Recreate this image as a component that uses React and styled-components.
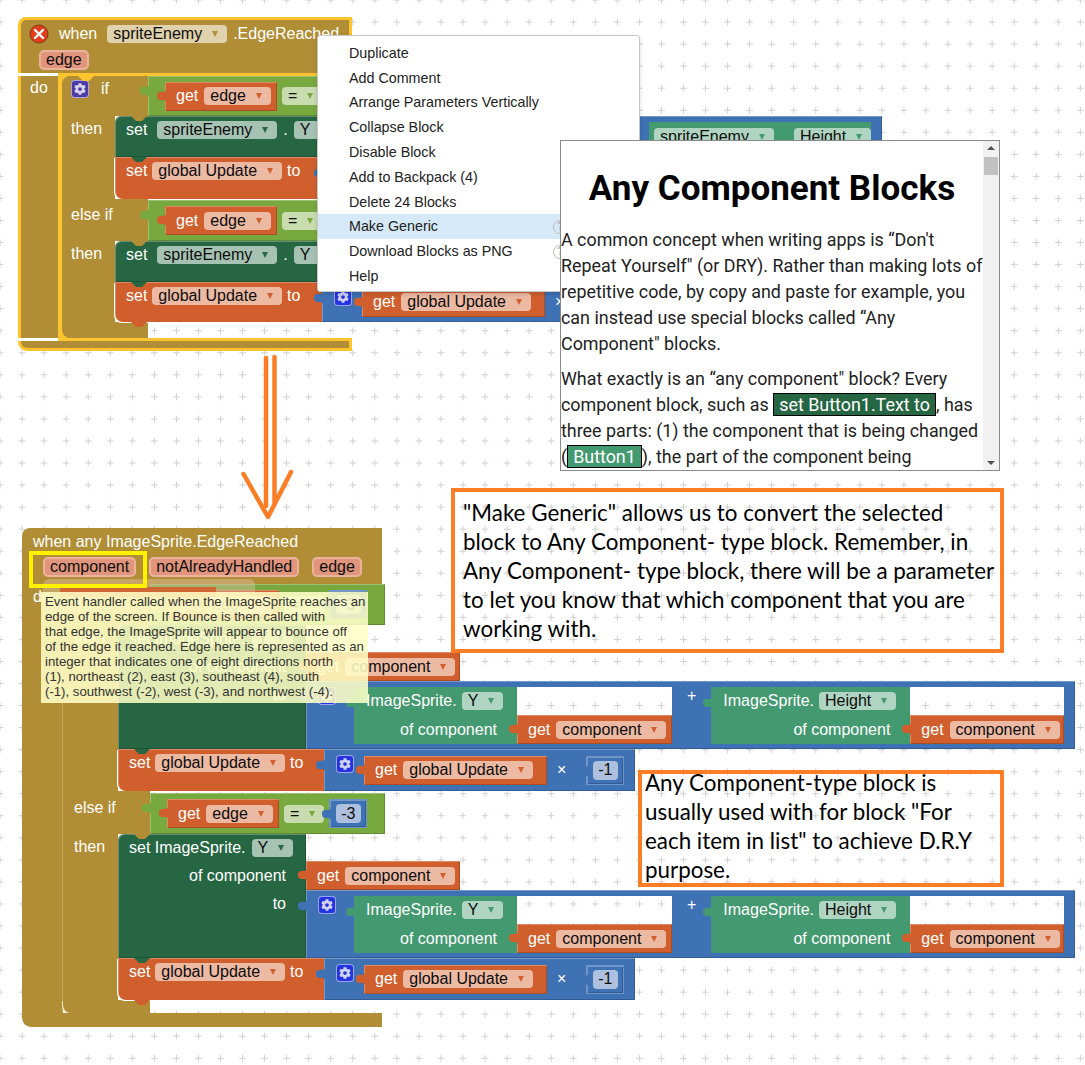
import styled, { createGlobalStyle, css } from "styled-components";
import { FaCog } from "react-icons/fa";

const BROWN = "#b18e35";
const YELLOW = "#fdc42f";
const GREEN = "#77a93f";
const DARK = "#266643";
const ORANGE = "#d05f2d";
const BLUE = "#3f71b5";
const TEAL = "#439970";
const NOTE = "#fb7d25";

const GlobalStyle = createGlobalStyle`
  html, body { margin: 0; padding: 0; background: #fff; }
  body { font-family: "Liberation Sans", Arial, sans-serif; }
`;

// blockly workspace dots, fixed so holes in blocks line up with the canvas
const dots = css`
  background-color: #fff;
  background-image:
    radial-gradient(0.8px 3px at 50% 50%, #cfcfcf 99%, transparent),
    radial-gradient(3px 0.8px at 50% 50%, #cfcfcf 99%, transparent);
  background-size: 22.05px 22.05px;
  background-position: -11px -11px;
  background-attachment: fixed;
`;

const bevel = css`
  box-shadow: inset 1px 1px 0 rgba(255, 255, 255, 0.28), inset -1px -1px 0 rgba(0, 0, 0, 0.18);
`;

const Canvas = styled.div`
  ${dots}
  position: relative;
  width: 1085px;
  height: 1065px;
  overflow: hidden;
  font-size: 16px;
  line-height: 18px;
`;

const EventBlock = styled.div`
  position: absolute;
  left: ${(p) => p.$left}px;
  top: ${(p) => p.$top}px;
  width: ${(p) => p.$w}px;
  display: flex;
  flex-direction: column;
`;

const Head = styled.div`
  box-sizing: border-box;
  height: ${(p) => p.$h}px;
  background: ${BROWN};
  border-radius: 8px 0 0 0;
  display: flex;
  flex-direction: column;
  ${(p) =>
    p.$selected &&
    css`
      border: 3px solid ${YELLOW};
      border-bottom: 0;
    `}
`;

const HeadRow = styled.div`
  display: flex;
  align-items: center;
  flex-shrink: 0;
  gap: ${(p) => p.$gap}px;
  height: ${(p) => p.$h}px;
  padding-left: ${(p) => p.$pad}px;
`;

const Edge = styled.div`
  height: 3px;
  flex-shrink: 0;
  margin-left: 40px;
  background: ${YELLOW};
`;

const Label = styled.span`
  color: #fff;
  white-space: nowrap;
`;

const HeadSuffix = styled(Label)`
  margin-left: -4px;
`;

const SetWord = styled(Label)`
  margin-right: 4px;
`;

const Body = styled.div`
  display: flex;
  align-items: stretch;
`;

const OuterSpine = styled.div`
  box-sizing: border-box;
  flex-shrink: 0;
  width: ${(p) => p.$w}px;
  background: ${BROWN};
  padding: ${(p) => (p.$selected ? "3px 0 0 9px" : "4px 0 0 11px")};
  border-right: 1px solid #c5a655;
  ${(p) =>
    p.$selected &&
    css`
      border-left: 3px solid ${YELLOW};
      border-right: 4px solid ${YELLOW};
    `}
`;

const IfStack = styled.div`
  display: flex;
  flex-direction: column;
`;

const CondRow = styled.div`
  display: flex;
  flex-shrink: 0;
  align-self: flex-start;
  height: ${(p) => p.$h}px;
  background: ${(p) => p.$corner || "transparent"};
`;

const CondSpine = styled.div`
  position: relative;
  box-sizing: border-box;
  flex-shrink: 0;
  width: ${(p) => p.$w}px;
  background: ${BROWN};
  display: flex;
  align-items: flex-start;
  gap: 12px;
  padding: ${(p) => p.$top}px 0 0 ${(p) => p.$pad}px;
  border-radius: ${(p) => (p.$round ? "8px 0 0 0" : "0")};
`;

const CondBlock = styled.div`
  ${bevel}
  position: relative;
  flex-shrink: 0;
  box-sizing: border-box;
  margin-top: ${(p) => p.$gap || 0}px;
  width: ${(p) => p.$w}px;
  background: ${GREEN};
  display: flex;
  align-items: center;
  gap: 5px;
  padding-left: 17px;
`;

const ThenRow = styled.div`
  display: flex;
  flex-shrink: 0;
`;

const ThenSpine = styled.div`
  box-sizing: border-box;
  flex-shrink: 0;
  width: ${(p) => p.$w}px;
  background: ${BROWN};
  padding: ${(p) => p.$top}px 0 0 ${(p) => p.$pad}px;
`;

const Stack = styled.div`
  display: flex;
  flex-direction: column;
`;

const StackLine = styled.div`
  display: flex;
  flex-shrink: 0;
`;

const Statement = styled.div`
  ${bevel}
  position: relative;
  box-sizing: border-box;
  flex-shrink: 0;
  width: ${(p) => p.$w}px;
  height: ${(p) => p.$h}px;
  background: ${(p) => p.$bg};
  border-radius: ${(p) => (p.$first ? "6px" : "0")} 0 0 ${(p) => (p.$last ? "8px" : "0")};
  display: flex;
  align-items: ${(p) => (p.$tall ? "stretch" : "flex-start")};
  flex-direction: ${(p) => (p.$tall ? "column" : "row")};
  padding: 5px 0 0 11px;
  gap: 6px;
  ${(p) =>
    p.$last &&
    css`
      box-shadow: inset 1px 1px 0 rgba(255, 255, 255, 0.28), -1px 1px 0 #fff;
    `}
`;

const StatementLine = styled.div`
  display: flex;
  align-items: center;
  gap: 6px;
  height: ${(p) => p.$h}px;
  justify-content: ${(p) => (p.$end ? "flex-end" : "flex-start")};
  padding-right: ${(p) => (p.$end ? 20 : 0)}px;
`;

const DarkLine = styled.div`
  display: flex;
  align-items: center;
  gap: 5px;
  height: 18px;
`;

const NotchShape = styled.svg`
  position: absolute;
  left: 16px;
  ${(p) => (p.$hang ? "bottom: -5px;" : "top: 0;")}
  width: 16px;
  height: 5px;
`;

const Notch = ({ color, hang }) => (
  <NotchShape $hang={hang} viewBox="0 0 16 5">
    <path d="M0 0 H16 L11 5 H5 Z" fill={color} />
  </NotchShape>
);

const TabShape = styled.svg`
  position: absolute;
  left: -9px;
  top: ${(p) => p.$top}px;
  width: 10px;
  height: 16px;
`;

const Tab = ({ color, top = 7 }) => (
  <TabShape $top={top} viewBox="0 0 10 16">
    <path d="M10 0 V2 C9 6 1 1 1 8 C1 15 9 10 10 14 V16 Z" fill={color} />
  </TabShape>
);

const Chip = styled.span`
  display: inline-flex;
  flex-shrink: 0;
  align-items: center;
  height: 18px;
  padding: 0 9px 0 6px;
  gap: 10px;
  border-radius: 4px;
  background: ${(p) => p.$bg};
  color: #0d0d0d;
  white-space: nowrap;
  &::after {
    content: "";
    border-left: 3.5px solid transparent;
    border-right: 3.5px solid transparent;
    border-top: 6px solid ${(p) => p.$caret};
  }
`;

const ParamChip = styled.span`
  box-sizing: border-box;
  display: inline-flex;
  flex-shrink: 0;
  align-items: center;
  height: 20px;
  padding: 0 5px;
  border-radius: 5px;
  background: #e0957c;
  border: 2px solid #ebb39d;
  color: #0d0d0d;
  white-space: nowrap;
`;

const Mutator = styled.span`
  flex-shrink: 0;
  box-sizing: border-box;
  align-self: flex-start;
  margin-top: ${(p) => p.$top || 0}px;
  width: 18px;
  height: 18px;
  display: flex;
  align-items: center;
  justify-content: center;
  border-radius: 4px;
  background: ${(p) => p.$bg};
  border: 1px solid rgba(255, 255, 255, 0.55);
  color: rgba(255, 255, 255, 0.78);
  font-size: 12px;
`;

const GetBlock = styled.div`
  ${bevel}
  position: relative;
  box-sizing: border-box;
  flex-shrink: 0;
  width: ${(p) => p.$w}px;
  height: 29px;
  background: ${ORANGE};
  display: flex;
  align-items: center;
  gap: 6px;
  padding-left: 11px;
`;

const NumBlock = styled.div`
  ${bevel}
  position: relative;
  box-sizing: border-box;
  flex-shrink: 0;
  width: 38px;
  height: 29px;
  background: ${BLUE};
  display: flex;
  align-items: center;
  justify-content: center;
  border: 1px solid #6d93c9;
`;

const NumChip = styled.span`
  width: 25px;
  height: 19px;
  border-radius: 4px;
  background: #adc0de;
  color: #0d0d0d;
  display: flex;
  align-items: center;
  justify-content: center;
`;

const BlueBlock = styled.div`
  ${bevel}
  position: relative;
  box-sizing: border-box;
  flex-shrink: 0;
  width: ${(p) => p.$w}px;
  height: ${(p) => p.$h}px;
  background: ${BLUE};
  display: flex;
  align-items: ${(p) => p.$align || "center"};
  justify-content: ${(p) => p.$justify || "flex-start"};
  padding: ${(p) => p.$pad || "0 0 0 12px"};
`;

const ValueCol = styled.div`
  display: flex;
  flex-direction: column;
  margin-top: 27px;
`;

const Getter = styled.div`
  position: relative;
  flex-shrink: 0;
  width: ${(p) => p.$w}px;
  display: flex;
  flex-direction: column;
`;

const GetterRow = styled.div`
  display: flex;
  height: ${(p) => p.$h}px;
`;

const TealPart = styled.div`
  box-sizing: border-box;
  flex-shrink: 0;
  width: ${(p) => p.$w}px;
  background: ${TEAL};
  display: flex;
  align-items: center;
  justify-content: ${(p) => (p.$end ? "flex-end" : "flex-start")};
  gap: 5px;
  padding: ${(p) => p.$pad};
`;

const Hole = styled.div`
  ${dots}
  flex: 1;
`;

const Foot = styled.div`
  box-sizing: border-box;
  flex-shrink: 0;
  height: ${(p) => p.$h}px;
  background: ${BROWN};
  border-radius: 0 0 0 9px;
  ${(p) =>
    p.$selected &&
    css`
      border: 3px solid ${YELLOW};
      border-top: 0;
    `}
`;

const InnerFoot = styled.div`
  flex-shrink: 0;
  height: ${(p) => p.$h}px;
  width: ${(p) => p.$w}px;
  background: ${BROWN};
  border-radius: 0 0 0 8px;
  box-shadow: ${(p) => (p.$selected ? `-4px 3px 0 ${YELLOW}` : "-1px 1px 0 #efe6cc")};
`;

const RowGap = styled.div`
  flex-shrink: 0;
  width: ${(p) => p.$w}px;
`;

const CloseIcon = styled.svg`
  flex-shrink: 0;
  width: 20px;
  height: 20px;
`;

const GhostChip = styled.div`
  position: absolute;
  left: 43px;
  top: 579px;
  width: 212px;
  height: 34px;
  border-radius: 6px;
  background: rgba(225, 190, 160, 0.45);
`;

const GhostBar = styled.div`
  position: absolute;
  left: 60px;
  top: 587px;
  width: 156px;
  height: 10px;
  background: rgba(208, 95, 45, 0.9);
`;

const Highlight = styled.div`
  box-sizing: border-box;
  position: absolute;
  left: 29px;
  top: 551px;
  width: 118px;
  height: 37px;
  border: 4px solid #fff200;
`;

const Tooltip = styled.div`
  box-sizing: border-box;
  position: absolute;
  left: 41px;
  top: 592px;
  width: 327px;
  height: 111px;
  padding: 2px 0 0 4px;
  background: rgba(255, 255, 199, 0.87);
  color: #333;
  font-size: 13.2px;
  line-height: 15px;
  white-space: nowrap;
`;

const Menu = styled.div`
  box-sizing: border-box;
  position: absolute;
  left: 317px;
  top: 35px;
  width: 323px;
  height: 257px;
  padding-top: 4.5px;
  background: #fff;
  border: 1px solid #c8c8c8;
  border-radius: 3px;
  box-shadow: 0 2px 4px rgba(0, 0, 0, 0.15);
  display: flex;
  flex-direction: column;
`;

const MenuItem = styled.div`
  position: relative;
  flex-shrink: 0;
  height: 24.8px;
  display: flex;
  align-items: center;
  padding-left: 31px;
  font-size: 14.3px;
  color: #222;
  background: ${(p) => (p.$active ? "#d6e9f8" : "transparent")};
`;

const HelpDot = styled.span`
  position: absolute;
  left: 235px;
  top: 6px;
  width: 12px;
  height: 12px;
  border-radius: 50%;
  border: 1px solid #bbb;
  color: #999;
  font-size: 10px;
  line-height: 12px;
  text-align: center;
`;

const HelpPanel = styled.div`
  box-sizing: border-box;
  position: absolute;
  left: 560px;
  top: 140px;
  width: 440px;
  height: 331px;
  background: #fff;
  border: 1px solid #8a8a8a;
  display: flex;
  font-family: Roboto, "Liberation Sans", sans-serif;
  color: #222;
`;

const HelpBody = styled.div`
  flex: 1;
  min-width: 0;
  overflow: hidden;
  font-size: 17.9px;
  line-height: 26px;
`;

const HelpTitle = styled.h1`
  margin: 27px 0 17px;
  text-align: center;
  font-size: 35px;
  line-height: 42px;
  font-weight: 700;
  color: #000;
`;

const HelpText = styled.p`
  margin: 0 0 9px;
  white-space: nowrap;
`;

const CodeTag = styled.span`
  padding: 0 5px;
  background: ${(p) => p.$bg};
  border: 1px solid #000;
  color: #fff;
`;

const Scrollbar = styled.div`
  position: relative;
  flex-shrink: 0;
  width: 16px;
  background: #f1f1f1;
`;

const ScrollThumb = styled.div`
  position: absolute;
  left: 1px;
  top: 16px;
  width: 14px;
  height: 18px;
  background: #c1c1c1;
`;

const ScrollArrow = styled.div`
  position: absolute;
  left: 4px;
  ${(p) => (p.$down ? "bottom: 5px;" : "top: 5px;")}
  border-left: 4px solid transparent;
  border-right: 4px solid transparent;
  ${(p) => (p.$down ? "border-top" : "border-bottom")}: 4px solid #505050;
`;

const NoteBox = styled.div`
  box-sizing: border-box;
  position: absolute;
  left: ${(p) => p.$left}px;
  top: ${(p) => p.$top}px;
  width: ${(p) => p.$w}px;
  height: ${(p) => p.$h}px;
  padding-left: ${(p) => p.$pad}px;
  border: 4.5px solid ${NOTE};
  font-family: Lato, "Liberation Sans", sans-serif;
  font-size: 22.4px;
  line-height: 29px;
  color: #000;
  white-space: nowrap;
`;

const NoteText = styled.div`
  margin-top: ${(p) => p.$top}px;
`;

const ArrowDrawing = styled.svg`
  position: absolute;
  left: 235px;
  top: 350px;
  width: 65px;
  height: 175px;
`;

const EdgeChip = () => <Chip $bg="#ecb9a3" $caret={ORANGE}>edge</Chip>;

const GetEdge = () => (
  <GetBlock $w={112}>
    <Tab color={ORANGE} top={6} />
    <Label>get</Label>
    <EdgeChip />
  </GetBlock>
);

const GetGlobal = ({ w = 180 }) => (
  <GetBlock $w={w}>
    <Tab color={ORANGE} top={6} />
    <Label>get</Label>
    <Chip $bg="#ecb9a3" $caret={ORANGE}>global Update</Chip>
  </GetBlock>
);

const GetComponent = ({ w }) => (
  <GetBlock $w={w}>
    <Tab color={ORANGE} top={6} />
    <Label>get</Label>
    <Chip $bg="#ecb9a3" $caret={ORANGE}>component</Chip>
  </GetBlock>
);

const Condition = ({ w, value, gap }) => (
  <CondBlock $w={w} $gap={gap}>
    <Tab color={GREEN} top={7} />
    <GetEdge />
    <Chip $bg="#c8dcb0" $caret={GREEN}>=</Chip>
    {value && (
      <NumBlock>
        <Tab color={BLUE} top={6} />
        <NumChip>{value}</NumChip>
      </NumBlock>
    )}
  </CondBlock>
);

const SetGlobal = ({ w, h, last, gear, valueW }) => (
  <StackLine>
    <Statement $w={w} $h={h} $bg={ORANGE} $last={last}>
      <Notch color={DARK} />
      {last && <Notch color={ORANGE} hang />}
      <DarkLine>
        <Label>set</Label>
        <Chip $bg="#ecb9a3" $caret={ORANGE}>global Update</Chip>
        <Label>to</Label>
      </DarkLine>
    </Statement>
    <BlueBlock $w={valueW} $h={h}>
      <Tab color={BLUE} top={8} />
      <Mutator $bg={gear} $top={6}><FaCog /></Mutator>
      <RowGap $w={10} />
      <GetGlobal w={183} />
      <RowGap $w={10} />
      <Label>×</Label>
      <RowGap $w={20} />
      <NumBlock>
        <Tab color={BLUE} top={6} />
        <NumChip>-1</NumChip>
      </NumBlock>
    </BlueBlock>
  </StackLine>
);

const SetSprite = ({ h }) => (
  <StackLine>
    <Statement $w={210} $h={h} $bg={DARK} $first>
      <Notch color={BROWN} />
      <SetWord>set</SetWord>
      <Chip $bg="#a6c2b3" $caret={DARK}>spriteEnemy</Chip>
      <Label>.</Label>
      <Chip $bg="#a6c2b3" $caret={DARK}>Y</Chip>
    </Statement>
    <BlueBlock $w={557} $h={h} $justify="flex-end" $align="flex-start" $pad="6px 11px 0 0">
      <TealPart $w={222} $pad="6px 0 12px 5px">
        <Chip $bg="#b0d4c2" $caret={TEAL}>spriteEnemy</Chip>
        <RowGap $w={10} />
        <Chip $bg="#b0d4c2" $caret={TEAL}>Height</Chip>
      </TealPart>
    </BlueBlock>
  </StackLine>
);

const SpriteGetter = ({ w, tealW, prop, getW }) => (
  <Getter $w={w}>
    <Tab color={TEAL} top={8} />
    <GetterRow $h={28}>
      <TealPart $w={tealW} $pad="0 0 0 12px">
        <Label>ImageSprite.</Label>
        <Chip $bg="#b0d4c2" $caret={TEAL}>{prop}</Chip>
      </TealPart>
      <Hole />
    </GetterRow>
    <GetterRow $h={29}>
      <TealPart $w={tealW} $end $pad="0 20px 0 0">
        <Label>of component</Label>
      </TealPart>
      <GetComponent w={getW} />
    </GetterRow>
  </Getter>
);

const SetAnySprite = () => (
  <StackLine>
    <Statement $w={188} $h={124} $bg={DARK} $first $tall>
      <Notch color={BROWN} />
      <StatementLine $h={18}>
        <Label>set ImageSprite.</Label>
        <Chip $bg="#a6c2b3" $caret={DARK}>Y</Chip>
      </StatementLine>
      <StatementLine $h={26} $end>
        <Label>of component</Label>
      </StatementLine>
      <StatementLine $h={18} $end>
        <Label>to</Label>
      </StatementLine>
    </Statement>
    <ValueCol>
      <GetComponent w={154} />
      <BlueBlock $w={769} $h={68} $align="flex-start" $pad="6px 0 0 12px">
        <Tab color={BLUE} top={8} />
        <Mutator $bg="#2433e0"><FaCog /></Mutator>
        <RowGap $w={18} />
        <SpriteGetter w={318} tealW={163} prop="Y" getW={155} />
        <RowGap $w={15} />
        <Label>+</Label>
        <RowGap $w={15} />
        <SpriteGetter w={353} tealW={199} prop="Height" getW={154} />
      </BlueBlock>
    </ValueCol>
  </StackLine>
);

function App() {
  return (
    <Canvas>
      <GlobalStyle />

      <EventBlock $left={18} $top={17} $w={334}>
        <Head $h={56} $selected>
          <HeadRow $h={28} $gap={10} $pad={8}>
            <CloseIcon viewBox="0 0 20 20">
              <circle cx="10" cy="10" r="9" fill="#e53b1d" stroke="#7a3b1a" strokeWidth="1" />
              <path d="M6 6 L14 14 M14 6 L6 14" stroke="#fff" strokeWidth="2.4" strokeLinecap="round" />
            </CloseIcon>
            <Label>when</Label>
            <Chip $bg="#dfd2ad" $caret={BROWN}>spriteEnemy</Chip>
            <HeadSuffix>.EdgeReached</HeadSuffix>
          </HeadRow>
          <HeadRow $h={24} $gap={0} $pad={18}>
            <ParamChip>edge</ParamChip>
          </HeadRow>
        </Head>
        <Edge />
        <Body>
          <OuterSpine $w={44} $selected>
            <Label>do</Label>
          </OuterSpine>
          <IfStack>
            <CondRow $h={40} $corner={YELLOW}>
              <CondSpine $w={86} $pad={9} $top={4} $round>
                <Notch color={YELLOW} />
                <Mutator $bg="#4b3aa8"><FaCog /></Mutator>
                <Label>if</Label>
              </CondSpine>
              <Condition w={240} />
            </CondRow>
            <ThenRow>
              <ThenSpine $w={53} $top={4} $pad={9}><Label>then</Label></ThenSpine>
              <Stack>
                <SetSprite h={41} />
                <SetGlobal w={207} h={42} last gear="#4b3aa8" valueW={320} />
              </Stack>
            </ThenRow>
            <CondRow $h={42}>
              <CondSpine $w={86} $pad={9} $top={7}><Label>else if</Label></CondSpine>
              <Condition w={240} gap={1} />
            </CondRow>
            <ThenRow>
              <ThenSpine $w={53} $top={4} $pad={9}><Label>then</Label></ThenSpine>
              <Stack>
                <SetSprite h={41} />
                <SetGlobal w={207} h={40} last gear="#2433e0" valueW={320} />
              </Stack>
            </ThenRow>
            <InnerFoot $w={86} $h={16} $selected />
          </IfStack>
        </Body>
        <Edge />
        <Foot $h={10} $selected />
      </EventBlock>

      <EventBlock $left={22} $top={528} $w={360}>
        <Head $h={56}>
          <HeadRow $h={27} $gap={0} $pad={11}>
            <Label>when any ImageSprite.EdgeReached</Label>
          </HeadRow>
          <HeadRow $h={23} $gap={13} $pad={21}>
            <ParamChip>component</ParamChip>
            <ParamChip>notAlreadyHandled</ParamChip>
            <ParamChip>edge</ParamChip>
          </HeadRow>
        </Head>
        <Body>
          <OuterSpine $w={41}>
            <Label>do</Label>
          </OuterSpine>
          <IfStack>
            <CondRow $h={41}>
              <CondSpine $w={87} $pad={11} $top={7}><Label>if</Label></CondSpine>
              <Condition w={235} value="-3" />
            </CondRow>
            <ThenRow>
              <ThenSpine $w={55} $top={4} $pad={11}><Label>then</Label></ThenSpine>
              <Stack>
                <SetAnySprite />
                <SetGlobal w={206} h={42} last gear="#2433e0" valueW={311} />
              </Stack>
            </ThenRow>
            <CondRow $h={43}>
              <CondSpine $w={87} $pad={11} $top={8}><Label>else if</Label></CondSpine>
              <Condition w={235} value="-3" gap={2} />
            </CondRow>
            <ThenRow>
              <ThenSpine $w={55} $top={4} $pad={11}><Label>then</Label></ThenSpine>
              <Stack>
                <SetAnySprite />
                <SetGlobal w={206} h={42} last gear="#2433e0" valueW={311} />
              </Stack>
            </ThenRow>
            <InnerFoot $w={87} $h={13} />
          </IfStack>
        </Body>
        <Foot $h={14} />
      </EventBlock>

      <ArrowDrawing viewBox="0 0 65 175">
        <g stroke={NOTE} strokeWidth="4.5" fill="none" strokeLinecap="round" strokeLinejoin="round">
          <path d="M31 8 L31 156" />
          <path d="M39.5 7 L39.5 152" />
          <path d="M8.5 124 L33 167 L56 122" />
        </g>
      </ArrowDrawing>

      <Menu>
        <MenuItem>Duplicate</MenuItem>
        <MenuItem>Add Comment</MenuItem>
        <MenuItem>Arrange Parameters Vertically</MenuItem>
        <MenuItem>Collapse Block</MenuItem>
        <MenuItem>Disable Block</MenuItem>
        <MenuItem>Add to Backpack (4)</MenuItem>
        <MenuItem>Delete 24 Blocks</MenuItem>
        <MenuItem $active>Make Generic<HelpDot>?</HelpDot></MenuItem>
        <MenuItem>Download Blocks as PNG<HelpDot>?</HelpDot></MenuItem>
        <MenuItem>Help</MenuItem>
      </Menu>

      <HelpPanel>
        <HelpBody>
          <HelpTitle>Any Component Blocks</HelpTitle>
          <HelpText>
            A common concept when writing apps is “Don't<br />
            Repeat Yourself" (or DRY). Rather than making lots of<br />
            repetitive code, by copy and paste for example, you<br />
            can instead use special blocks called “Any<br />
            Component" blocks.
          </HelpText>
          <HelpText>
            What exactly is an “any component" block? Every<br />
            component block, such as <CodeTag $bg={DARK}>set Button1.Text to</CodeTag>, has<br />
            three parts: (1) the component that is being changed<br />
            (<CodeTag $bg={TEAL}>Button1</CodeTag>), the part of the component being
          </HelpText>
        </HelpBody>
        <Scrollbar>
          <ScrollArrow />
          <ScrollThumb />
          <ScrollArrow $down />
        </Scrollbar>
      </HelpPanel>

      <GhostChip />
      <GhostBar />
      <Highlight />
      <Tooltip>
        Event handler called when the ImageSprite reaches an<br />
        edge of the screen. If Bounce is then called with<br />
        that edge, the ImageSprite will appear to bounce off<br />
        of the edge it reached. Edge here is represented as an<br />
        integer that indicates one of eight directions north<br />
        (1), northeast (2), east (3), southeast (4), south<br />
        (-1), southwest (-2), west (-3), and northwest (-4).
      </Tooltip>

      <NoteBox $left={451} $top={488} $w={553} $h={165} $pad={8}>
        <NoteText $top={6}>
          "Make Generic" allows us to convert the selected<br />
          block to Any Component- type block. Remember, in<br />
          Any Component- type block, there will be a parameter<br />
          to let you know that which component that you are<br />
          working with.
        </NoteText>
      </NoteBox>
      <NoteBox $left={638} $top={770} $w={366} $h={117} $pad={3}>
        <NoteText $top={-6}>
          Any Component-type block is<br />
          usually used with for block "For<br />
          each item in list" to achieve D.R.Y<br />
          purpose.
        </NoteText>
      </NoteBox>
    </Canvas>
  );
}

export default App;
